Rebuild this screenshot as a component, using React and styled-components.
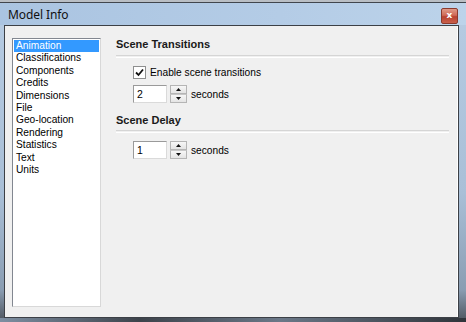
import React from "react";
import styled, { createGlobalStyle } from "styled-components";

const Global = createGlobalStyle`
  html, body { margin: 0; padding: 0; background: #5b6470; }
  body { font-family: "Liberation Sans", Arial, sans-serif; }
`;

const Screen = styled.div`
  width: 466px;
  height: 322px;
  display: flex;
  flex-direction: column;
  background: linear-gradient(to bottom, #b7cce3 0%, #a9bfd7 60%, #8a9db2 90%, #4c535c 100%);
  overflow: hidden;
`;

const TopEdge = styled.div`
  height: 3px;
  flex: none;
  background: linear-gradient(to bottom, #b9bec4 0 2px, #41464d 2px 3px);
`;

const TitleBar = styled.div`
  height: 22px;
  flex: none;
  display: flex;
  align-items: center;
  justify-content: space-between;
  padding: 0 8px 0 8px;
  background: linear-gradient(to right, #aac4e1 0%, #b4cce6 60%, #bcd3ea 100%);
`;

const Title = styled.span`
  font-family: "Noto Sans", "Open Sans", sans-serif;
  font-size: 12px;
  color: #111;
  letter-spacing: -0.1px;
`;

const CloseButton = styled.div`
  width: 15px;
  height: 14px;
  margin-top: 3px;
  border: 1px solid #8a3a2e;
  border-radius: 2px;
  background: linear-gradient(to bottom, #e09a88 0%, #cf6a57 45%, #b8412f 55%, #c9604c 100%);
  display: flex;
  align-items: center;
  justify-content: center;
  color: #fff;
  font-family: "DejaVu Sans", sans-serif;
  font-weight: bold;
  font-size: 9px;
  line-height: 1;
`;

const Body = styled.div`
  flex: 1;
  display: flex;
  margin: 0 7px 0 4px;
  border: 1px solid #3c4046;
  box-shadow: inset -1px 0 0 #ffffff;
  background: #f0f0f0;
  padding: 12px 9px 10px 7px;
  min-height: 0;
`;

const BottomEdge = styled.div`
  height: 4px;
  flex: none;
  background: linear-gradient(to right, #7e8fa2 0%, #3d434b 30%, #6b7888 60%, #2f343a 100%);
`;

const List = styled.ul`
  list-style: none;
  margin: 0;
  padding: 1px;
  width: 85px;
  height: 265px;
  flex: none;
  background: #fff;
  border: 1px solid #828790;
  border-right-color: #d8d8d8;
  border-bottom-color: #d8d8d8;
`;

const Item = styled.li`
  font-size: 10.2px;
  line-height: 12.4px;
  padding-left: 2px;
  color: ${(p) => (p.$selected ? "#fff" : "#000")};
  background: ${(p) => (p.$selected ? "#3399ff" : "transparent")};
  white-space: nowrap;
`;

const Panel = styled.div`
  flex: 1;
  margin-left: 15px;
  display: flex;
  flex-direction: column;
`;

const Heading = styled.div`
  font-size: 11px;
  font-weight: bold;
  line-height: 13px;
  color: #1a1a1a;
  margin-top: ${(p) => p.$top || 0}px;
`;

const Separator = styled.div`
  height: 1px;
  border-top: 1px solid #d5d5d5;
  border-bottom: 1px solid #ffffff;
  margin-top: ${(p) => p.$top || 0}px;
`;

const Row = styled.div`
  display: flex;
  align-items: center;
  padding-left: 17px;
  margin-top: ${(p) => p.$top || 0}px;
  font-size: 10.2px;
  color: #000;
`;

const CheckBox = styled.div`
  width: 11px;
  height: 11px;
  border: 1px solid #8e8f8f;
  background: #fff;
  display: flex;
  align-items: center;
  justify-content: center;
  margin-right: 4px;
`;

const Input = styled.div`
  width: 29px;
  height: 16px;
  border: 1px solid #9a9a9a;
  border-right-color: #dadada;
  border-bottom-color: #dadada;
  background: #fff;
  font-size: 10.5px;
  line-height: 16px;
  padding-left: 3px;
  box-sizing: content-box;
`;

const Spinner = styled.div`
  width: 17px;
  height: 18px;
  margin-left: 3px;
  display: flex;
  flex-direction: column;
`;

const SpinButton = styled.div`
  flex: 1;
  border: 1px solid #b5b5b5;
  background: linear-gradient(to bottom, #f7f7f7, #e4e4e4);
  display: flex;
  align-items: center;
  justify-content: center;
  & + & { border-top-color: #c8c8c8; }
`;

const Label = styled.span`
  margin-left: ${(p) => (p.$flush ? 0 : 4)}px;
  line-height: 13px;
`;

const Arrow = ({ down }) => (
  <svg width="5" height="3" viewBox="0 0 5 3">
    <path d={down ? "M0 0H5L2.5 3Z" : "M0 3H5L2.5 0Z"} fill="#111" />
  </svg>
);

const SpinBox = ({ value }) => (
  <>
    <Input>{value}</Input>
    <Spinner>
      <SpinButton>
        <Arrow />
      </SpinButton>
      <SpinButton>
        <Arrow down />
      </SpinButton>
    </Spinner>
    <Label>seconds</Label>
  </>
);

const items = [
  "Animation",
  "Classifications",
  "Components",
  "Credits",
  "Dimensions",
  "File",
  "Geo-location",
  "Rendering",
  "Statistics",
  "Text",
  "Units",
];

export default function App() {
  return (
    <>
      <Global />
      <Screen>
        <TopEdge />
        <TitleBar>
          <Title>Model Info</Title>
          <CloseButton>x</CloseButton>
        </TitleBar>
        <Body>
          <List>
            {items.map((it, i) => (
              <Item key={it} $selected={i === 0}>
                {it}
              </Item>
            ))}
          </List>
          <Panel>
            <Heading>Scene Transitions</Heading>
            <Separator $top={4} />
            <Row $top={8}>
              <CheckBox>
                <svg width="9" height="9" viewBox="0 0 9 9">
                  <path d="M1 4.5L3.5 7L8 1.5" stroke="#111" strokeWidth="1.8" fill="none" />
                </svg>
              </CheckBox>
              <Label $flush>Enable scene transitions</Label>
            </Row>
            <Row $top={6}>
              <SpinBox value="2" />
            </Row>
            <Heading $top={11}>Scene Delay</Heading>
            <Separator $top={3} />
            <Row $top={8}>
              <SpinBox value="1" />
            </Row>
          </Panel>
        </Body>
        <BottomEdge />
      </Screen>
    </>
  );
}
